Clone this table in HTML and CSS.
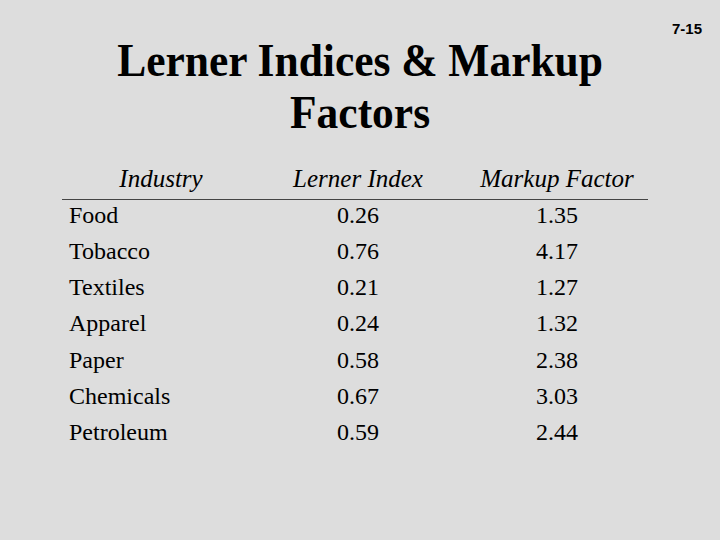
FILE: index.html
```html
<!DOCTYPE html>
<html lang="en">
<head>
<meta charset="utf-8">
<title>Lerner Indices &amp; Markup Factors</title>
<link rel="stylesheet" href="styles.css">
</head>
<body>
<div class="slide">
  <header class="header">
    <h1 class="title">Lerner Indices &amp; Markup<br>Factors</h1>
    <div class="slide-num">7-15</div>
  </header>
  <div class="table">
    <div class="th c1">Industry</div>
    <div class="th c2">Lerner Index</div>
    <div class="th c3">Markup Factor</div>

    <div class="td c1">Food</div><div class="td c2">0.26</div><div class="td c3">1.35</div>
    <div class="td c1">Tobacco</div><div class="td c2">0.76</div><div class="td c3">4.17</div>
    <div class="td c1">Textiles</div><div class="td c2">0.21</div><div class="td c3">1.27</div>
    <div class="td c1">Apparel</div><div class="td c2">0.24</div><div class="td c3">1.32</div>
    <div class="td c1">Paper</div><div class="td c2">0.58</div><div class="td c3">2.38</div>
    <div class="td c1">Chemicals</div><div class="td c2">0.67</div><div class="td c3">3.03</div>
    <div class="td c1">Petroleum</div><div class="td c2">0.59</div><div class="td c3">2.44</div>
  </div>
</div>
</body>
</html>
```
FILE: styles.css
```css
html, body {
  margin: 0;
  padding: 0;
  background: #dddddd;
}
.slide {
  width: 720px;
  height: 540px;
  background: #dddddd;
  color: #000;
  font-family: "Liberation Serif", "Times New Roman", serif;
  overflow: hidden;
}
.header {
  display: grid;
  grid-template-columns: 1fr auto 1fr;
  padding-top: 20px;
}
.title {
  grid-column: 2;
  margin: 15px 0 0 0;
  font-size: 46px;
  line-height: 52px;
  font-weight: bold;
  text-align: center;
  transform: scaleX(0.945);
  transform-origin: center;
}
.slide-num {
  grid-column: 3;
  grid-row: 1;
  justify-self: end;
  align-self: start;
  padding-right: 18px;
  font-family: "Liberation Sans", Arial, sans-serif;
  font-weight: bold;
  font-size: 15px;
  line-height: 17px;
}
.table {
  display: grid;
  grid-template-columns: 198px 196px 192px;
  width: 586px;
  margin: 24.5px 0 0 62px;
}
.th {
  font-style: italic;
  font-size: 25px;
  line-height: 30px;
  text-align: center;
  padding-bottom: 5px;
  border-bottom: 1px solid #444;
}
.td {
  font-size: 24px;
  line-height: 30px;
  padding-bottom: 6.3px;
}
.td.c1 {
  padding-left: 7px;
}
.td.c2 {
  text-align: center;
}
.c3 {
  text-align: center;
  padding-left: 10px;
}
```
